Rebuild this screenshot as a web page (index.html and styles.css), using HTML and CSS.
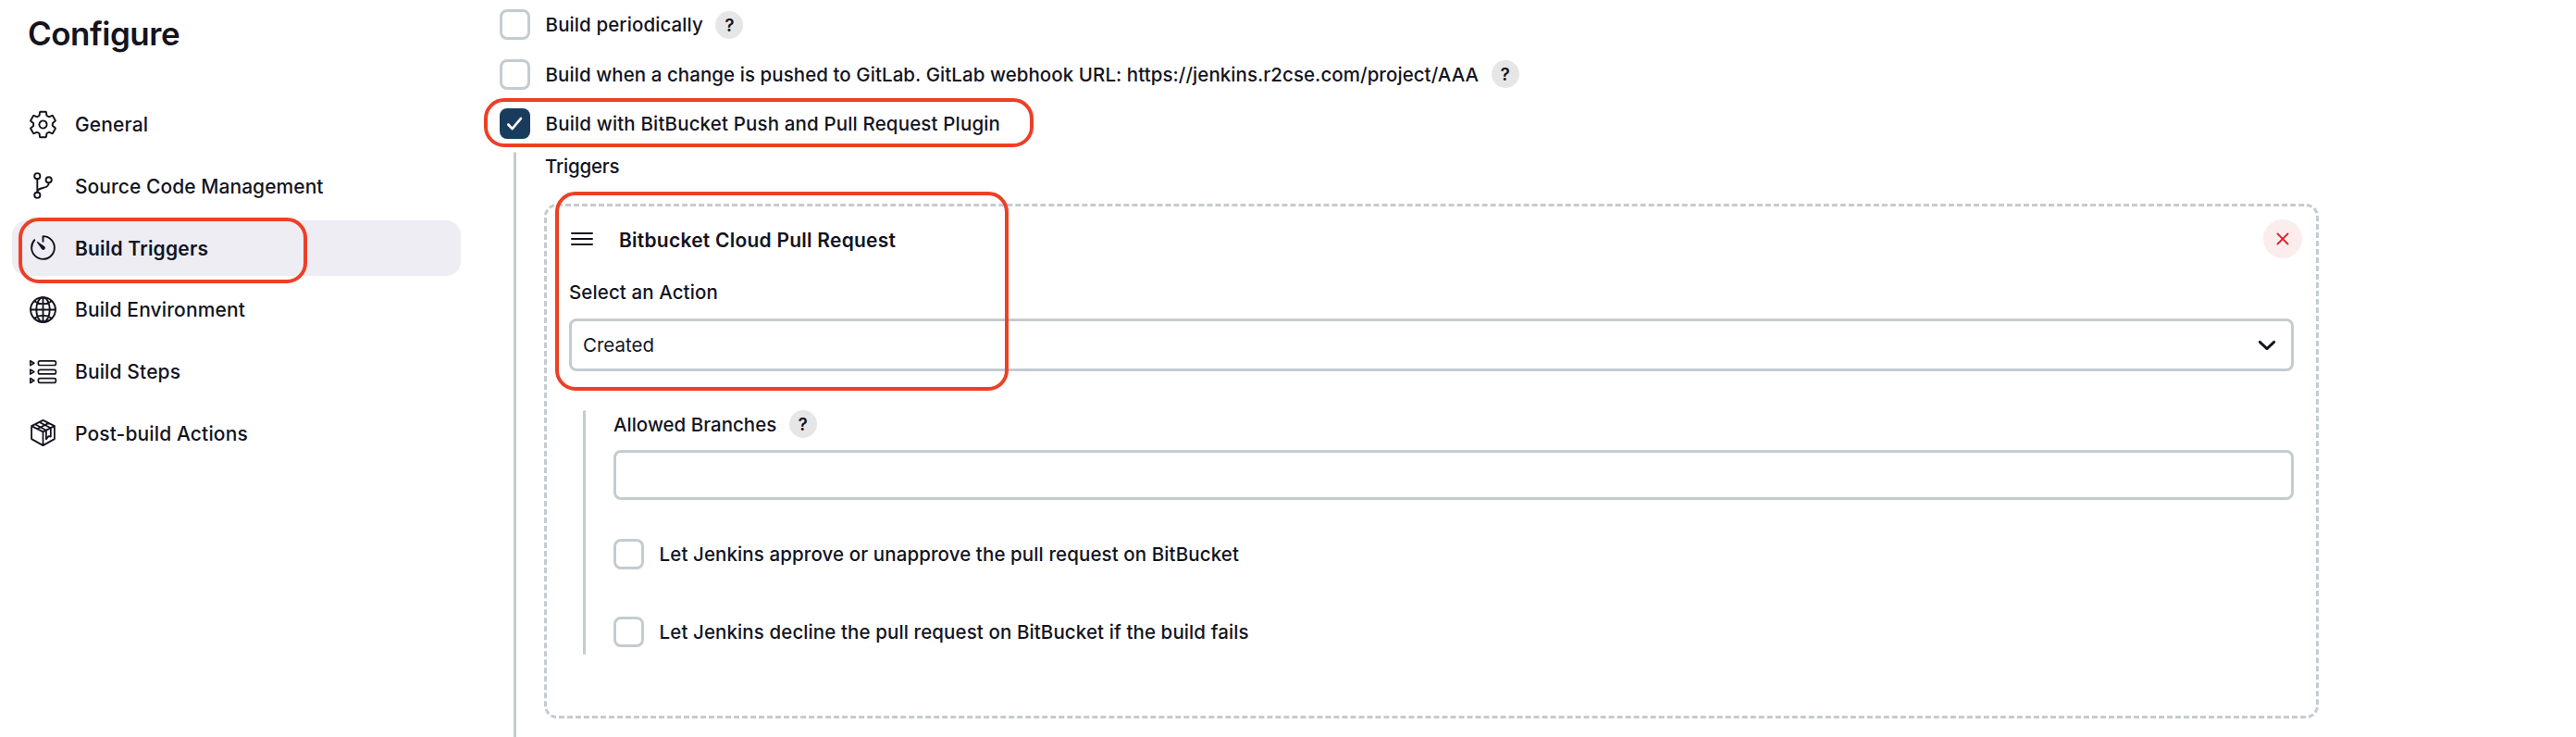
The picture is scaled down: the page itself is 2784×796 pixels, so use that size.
FILE: index.html
```html
<!DOCTYPE html>
<html lang="en">
<head>
<meta charset="utf-8">
<title>Configure</title>
<link rel="stylesheet" href="styles.css">
</head>
<body>
<div class="page">
  <aside class="sidebar">
    <h1 class="sidebar__title">Configure</h1>
    <nav class="nav">
      <a class="nav__item">
        <svg class="icon" viewBox="0 0 512 512"><path d="M262.29 192.31a64 64 0 1057.4 57.4 64.42 64.42 0 00-57.4-57.4zM416.39 256a154.34 154.34 0 01-1.53 20.79l45.21 35.46a10.81 10.81 0 012.45 13.75l-42.77 74a10.81 10.81 0 01-13.14 4.59l-44.9-18.08a16.11 16.11 0 00-15.17 1.75A164.48 164.48 0 01325 400.8a15.94 15.94 0 00-8.82 12.14l-6.73 47.89a11.08 11.08 0 01-10.68 9.17h-85.54a11.11 11.11 0 01-10.69-8.87l-6.72-47.82a16.07 16.07 0 00-9-12.22 155.3 155.3 0 01-21.46-12.57 16 16 0 00-15.11-1.71l-44.89 18.07a10.81 10.81 0 01-13.14-4.58l-42.77-74a10.8 10.8 0 012.45-13.75l38.21-30a16.05 16.05 0 006-14.08c-.36-4.17-.58-8.33-.58-12.5s.21-8.27.58-12.35a16 16 0 00-6.07-13.94l-38.19-30A10.81 10.81 0 0149.48 186l42.77-74a10.81 10.81 0 0113.14-4.59l44.9 18.08a16.11 16.11 0 0015.17-1.75A164.48 164.48 0 01187 111.2a15.94 15.94 0 008.82-12.14l6.73-47.89A11.08 11.08 0 01213.23 42h85.54a11.11 11.11 0 0110.69 8.87l6.72 47.82a16.07 16.07 0 009 12.22 155.3 155.3 0 0121.46 12.57 16 16 0 0015.11 1.71l44.89-18.07a10.81 10.81 0 0113.14 4.58l42.77 74a10.8 10.8 0 01-2.45 13.75l-38.21 30a16.05 16.05 0 00-6.05 14.08c.33 4.14.55 8.3.55 12.47z"/></svg>
        <span>General</span>
      </a>
      <a class="nav__item">
        <svg class="icon" viewBox="0 0 512 512"><circle cx="160" cy="96" r="48"/><circle cx="160" cy="416" r="48"/><circle cx="352" cy="160" r="48"/><path d="M160 368V144M352 208c0 128-192 48-192 160"/></svg>
        <span class="ls-scm">Source Code Management</span>
      </a>
      <a class="nav__item nav__item--active">
        <svg class="icon" viewBox="0 0 512 512"><path d="M112.91 128A191.85 191.85 0 0064 254c-1.18 106.35 85.65 193.8 192 194 106.2.2 192-85.83 192-192 0-104.54-83.55-189.61-187.5-192a4.36 4.36 0 00-4.5 4.37V152"/><path class="icon__solid" d="M233.38 278.63l-79-113a8.13 8.13 0 0111.32-11.32l113 79a32.5 32.5 0 01-37.25 53.26 33.21 33.21 0 01-8.07-7.94z"/></svg>
        <span>Build Triggers</span>
      </a>
      <a class="nav__item">
        <svg class="icon" viewBox="0 0 512 512"><circle cx="256" cy="256" r="208"/><path d="M256 48c-58.07 0-112.67 93.31-112.67 208S197.93 464 256 464s112.67-93.31 112.67-208S314.07 48 256 48zM117.33 117.33c38.24 27.15 86.38 43.34 138.67 43.34s100.43-16.19 138.67-43.34M394.67 394.67c-38.24-27.15-86.38-43.34-138.67-43.34s-100.43 16.19-138.67 43.34M256 48v416M464 256H48"/></svg>
        <span>Build Environment</span>
      </a>
      <a class="nav__item">
        <svg class="icon icon--fine" viewBox="0 0 33 33"><rect x="11.4" y="4.9" width="19" height="4.6" rx="1.7"/><rect x="11.4" y="14.3" width="19" height="4.6" rx="1.7"/><rect x="11.4" y="23.7" width="19" height="4.6" rx="1.7"/><path d="M2.8 4.8v4.8l4-2.4zM2.8 14.2v4.8l4-2.4zM2.8 23.6v4.8l4-2.4z"/></svg>
        <span>Build Steps</span>
      </a>
      <a class="nav__item">
        <svg class="icon icon--box" viewBox="0 0 33 33"><path d="M16.5 2.9l12.4 6.2v14L16.5 30.1 4.1 23.1v-14zM4.1 9.1l12.4 6.3 12.4-6.3M16.5 15.4v14.7M12.6 5l12.2 6.2v9.3l-2.3-.3-2.6 3.1v-9.6L8 7.3M10.3 12.2l12.4-6.3"/></svg>
        <span>Post-build Actions</span>
      </a>
    </nav>
    <div class="mark mark--nav"></div>
  </aside>

  <main class="content">
    <div class="options">
      <div class="option"><span class="check"></span><span class="label">Build periodically</span><span class="help">?</span></div>
      <div class="option"><span class="check"></span><span class="label ls-url">Build when a change is pushed to GitLab. GitLab webhook URL: https://jenkins.r2cse.com/project/AAA</span><span class="help">?</span></div>
      <div class="option"><span class="check check--on"><svg class="tick" viewBox="0 0 33 33"><path d="M9.3 17.5l4.3 4.6 9.4-11.2"/></svg></span><span class="label ls-plugin">Build with BitBucket Push and Pull Request Plugin</span></div>
    </div>
    <section class="nested">
      <div class="rail"></div>
      <div class="nested__body">
        <div class="label triggers">Triggers</div>
        <div class="chunk">
          <header class="chunk__head">
            <svg class="grip" viewBox="0 0 24 16"><path d="M1 2h22M1 8h22M1 14h22"/></svg>
            <strong class="chunk__title">Bitbucket Cloud Pull Request</strong>
            <span class="remove"><svg class="remove__x" viewBox="0 0 14 14"><path d="M1.5 1.5l11 11M12.5 1.5l-11 11"/></svg></span>
          </header>
          <div class="label action">Select an Action</div>
          <div class="select"><span>Created</span><svg class="chevron" viewBox="0 0 20 12"><path d="M2.3 2.4L10 9.6l7.7-7.2"/></svg></div>
          <div class="sub">
            <div class="rail"></div>
            <div class="sub__body">
              <div class="branches"><span class="label ls-branches">Allowed Branches</span><span class="help">?</span></div>
              <div class="input"></div>
              <div class="option"><span class="check"></span><span class="label">Let Jenkins approve or unapprove the pull request on BitBucket</span></div>
              <div class="option option--last"><span class="check"></span><span class="label">Let Jenkins decline the pull request on BitBucket if the build fails</span></div>
            </div>
          </div>
        </div>
      </div>
    </section>
  </main>
  <div class="mark mark--plugin"></div>
  <div class="mark mark--action"></div>
</div>
</body>
</html>
```
FILE: styles.css
```css
* { box-sizing: border-box; }

body {
  margin: 0;
  background: #fff;
  color: #14141f;
  font-family: Inter, "Liberation Sans", sans-serif;
  font-size: 20.5px;
  font-weight: 500;
}

.page {
  position: relative;
  display: flex;
  height: 796px;
  overflow: hidden;
}

.sidebar { width: 540px; flex: none; }

.sidebar__title {
  margin: 0;
  padding: 14px 0 0 30px;
  height: 104px;
  font-size: 35px;
  line-height: 44px;
  font-weight: 600;
  letter-spacing: -0.5px;
}

.nav {
  display: flex;
  flex-direction: column;
  gap: 6.8px;
  width: 485px;
  margin-left: 13px;
}

.nav__item {
  display: flex;
  align-items: center;
  gap: 18px;
  height: 60px;
  padding-left: 17px;
  border-radius: 16px;
  font-size: 21px;
  letter-spacing: 0.13px;
}
.nav__item span { padding-top: 1px; }

.nav__item--active {
  background: #ededf3;
  font-weight: 600;
  letter-spacing: 0.2px;
}

.ls-scm { letter-spacing: 0.05px; }

.icon {
  width: 33px;
  height: 33px;
  fill: none;
  stroke: #14141f;
  stroke-width: 30;
  stroke-linecap: round;
  stroke-linejoin: round;
}
.icon--fine { stroke-width: 1.7; }
.icon--box { stroke-width: 1.8; }
.icon__solid { fill: #14141f; stroke: none; }

.content { width: 1966px; padding-top: 10px; }

.options { display: flex; flex-direction: column; gap: 20.5px; }

.option { display: flex; align-items: center; height: 33px; }

.check {
  width: 33px;
  height: 33px;
  margin-right: 16.6px;
  border: 3px solid #c4ccd0;
  border-radius: 8px;
}
.check--on { border: 0; background: #1a3c5c; }

.tick {
  display: block;
  fill: none;
  stroke: #fff;
  stroke-width: 2.6;
  stroke-linecap: round;
  stroke-linejoin: round;
}

.label { letter-spacing: 0.1px; white-space: nowrap; }
.ls-url { letter-spacing: 0.06px; }
.ls-plugin { letter-spacing: 0.15px; }
.ls-branches { letter-spacing: 0; }

.help {
  width: 30px;
  height: 30px;
  margin-left: 13.5px;
  border-radius: 50%;
  background: #e6e6e6;
  font-size: 19px;
  font-weight: 600;
  line-height: 31px;
  text-align: center;
}

.rail { width: 3px; flex: none; border-radius: 2px; background: #c4ccd0; }

.nested { display: flex; gap: 30px; margin: 14px 0 0 15px; height: 660px; }
.nested__body { flex: 1; }

.triggers { height: 32px; padding-left: 1px; line-height: 32px; letter-spacing: -0.2px; margin-bottom: 24px; }

.chunk {
  height: 556px;
  padding: 14px 24px 0;
  border: 3px dashed #c4ccd0;
  border-radius: 14px;
}

.chunk__head {
  display: flex;
  align-items: center;
  height: 42px;
  margin-right: -9px;
}

.grip { width: 24px; height: 16px; margin-left: 1.5px; fill: none; stroke: #14141f; stroke-width: 2; stroke-linecap: round; }

.chunk__title { margin-left: 28.5px; padding-top: 2px; font-size: 21px; font-weight: 600; letter-spacing: 0.24px; }

.remove {
  display: grid;
  place-items: center;
  width: 42px;
  height: 42px;
  margin-left: auto;
  border-radius: 50%;
  background: #fbedee;
}
.remove__x { width: 14px; height: 14px; fill: none; stroke: #d9252b; stroke-width: 1.9; stroke-linecap: round; }

.action { margin: 22px 0 13px; height: 30px; line-height: 30px; }

.select {
  display: flex;
  align-items: center;
  justify-content: space-between;
  height: 57px;
  padding: 0 16px 0 12px;
  border: 3px solid #c4ccd0;
  border-radius: 8px;
  font-weight: 400;
}
.chevron { width: 20px; height: 12px; fill: none; stroke: #14141f; stroke-width: 2.9; stroke-linecap: round; stroke-linejoin: round; }

.sub { display: flex; gap: 30px; height: 264px; margin: 42px 0 0 15px; }
.sub__body { flex: 1; }

.branches { display: flex; align-items: center; height: 30px; }

.input {
  height: 54px;
  margin: 13px 0 42px;
  border: 3px solid #c4ccd0;
  border-radius: 8px;
}

.option--last { margin-top: 51px; }

/* Callout frames drawn over the interface */
.mark {
  position: absolute;
  border: 4px solid #ec4026;
  border-radius: 22px;
}
.mark--nav { left: 20px; top: 235px; width: 312px; height: 71px; }
.mark--plugin { left: 523px; top: 106px; width: 594px; height: 53px; }
.mark--action { left: 600px; top: 207px; width: 490px; height: 215px; }
```
